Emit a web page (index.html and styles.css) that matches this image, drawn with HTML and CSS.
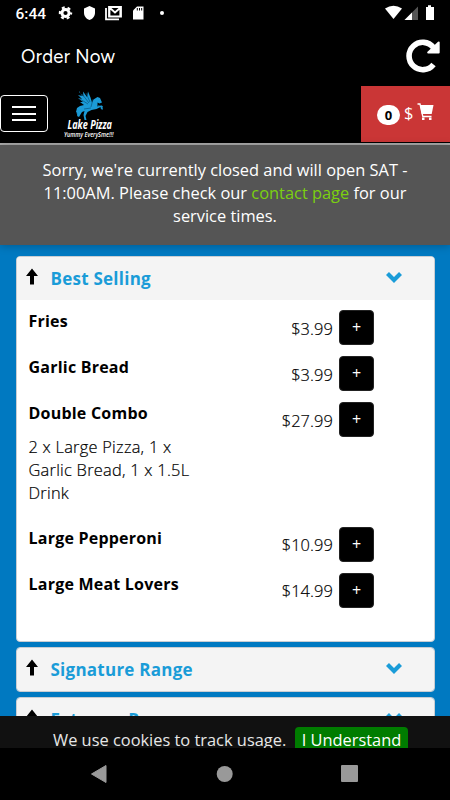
FILE: index.html
```html
<!DOCTYPE html>
<html lang="en">
<head>
<meta charset="utf-8">
<title>Order Now</title>
<link rel="stylesheet" href="styles.css">
</head>
<body>
<svg class="defs" width="0" height="0" aria-hidden="true">
  <symbol id="up" viewBox="0 0 14 17"><path d="M7 0.5 13 8H9v8.5H5V8H1z" fill="#000"/></symbol>
  <symbol id="down" viewBox="0 0 16 11"><path d="M1.500 1.500 8 8 14.500 1.500" fill="none" stroke="#1a9cd8" stroke-width="4.200"/></symbol>
</svg>
<div class="screen">
  <div class="status">
    <span class="clock">6:44</span>
    <svg class="status-left" width="110" height="28" viewBox="58 0 110 28" fill="#fff">
      <circle cx="65.5" cy="13" r="3.6" fill="none" stroke="#fff" stroke-width="3"/>
      <circle cx="65.5" cy="13" r="5.6" fill="none" stroke="#fff" stroke-width="2.2" stroke-dasharray="2.9 2.964" stroke-dashoffset="1.45"/>
      <path d="M89.500 6 95 8.500V13c0 3-2.300 6-5.500 7-3.200-1-5.500-4-5.500-7V8.500z"/>
      <path d="M106 8v11.300h13M109 7h12v9.500h-12zM109.500 7.500v8.500M110 8l5 4.500 5-4.500M120.300 7.500v8.500" fill="none" stroke="#fff" stroke-width="1.800"/>
      <path d="M137 6.500h6.500v13H133V10.500z"/>
      <path d="M137.300 8v2.500M139.500 8v2.500M141.700 8v2.500" stroke="#000"/>
      <circle cx="162" cy="13" r="2"/>
    </svg>
    <svg class="status-right" width="55" height="28" viewBox="383 0 55 28" fill="#fff">
      <path d="M385 8.500Q393.500 3 402 8.500L393.500 19z"/>
      <path d="M418 6.500V20H404.500z" fill="#555"/><path d="M412 12.500V20h-7.500z"/>
      <path d="M426 7h2V5.300h3V7h3v13h-8z"/>
    </svg>
  </div>
  <header class="title">
    <h1>Order Now</h1>
    <svg class="reload" width="36" height="36" viewBox="405 38 36 36">
      <path d="M433.500 64.500A13.700 13.700 0 1 1 433.500 47.500" fill="none" stroke="#fff" stroke-width="5.600"/>
      <path d="M438.700 42.500v10h-10.500z" fill="#fff" stroke="#fff" stroke-width="2" stroke-linejoin="round"/>
    </svg>
  </header>
  <nav class="navbar">
    <div class="burger"><i></i><i></i><i></i></div>
    <svg class="logo" width="56" height="56" viewBox="62 86 56 56">
      <g fill="#1b9bd7">
        <path d="M79 92l4.500 4.500-.5-5 4 5.500 1-5.500 2.500 6 1.500 5 1.500-3 4-2.500 2.500 1 2 4.500-2.500 1-2-1 0 4 4.500-1 1 4-1.500 0-1-2.500-4 2-5 1-4 2-2 4 1 4-2 0-1-5 1-4-2.500 1-3 5-2-1 1-3-2-1 1-4 3-2 4-1-4-3 3 0-5-4 4 1-4-4 4 1-3-5z"/>
        <path d="M79 111q-3 1-1 4M98 106l4 .5-1 2" fill="none" stroke="#1b9bd7" stroke-width="1.200"/>
      </g>
      <path d="M82 94l7 9M86 93l4 9M80 99l8 5M93 99l-2 8M84 109l7-1" stroke="#064a70" stroke-width=".6"/>
      <text x="67.500" y="129" class="logo-name" textLength="44.500" lengthAdjust="spacingAndGlyphs">Lake Pizza</text>
      <text x="64" y="137.300" class="logo-tag" textLength="49.500" lengthAdjust="spacingAndGlyphs">Yummy EverySme!!!</text>
    </svg>
    <div class="cart">
      <span class="count">0</span><span class="dollar">$</span>
      <svg width="18" height="18" viewBox="418 103 18 18"><path d="M418.500 104h2.500l2.800 12.500H432.500" fill="none" stroke="#fff" stroke-width="1.300"/><path d="M421 105h13.500l-1.800 9h-10z" fill="#fff"/><path d="M423 117.500h2.500v2.500h-2.500zM430 117.500h2.500v2.500h-2.500z" fill="#fff"/></svg>
    </div>
  </nav>
  <div class="notice">Sorry, we're currently closed and will open SAT - 11:00AM. Please check our <a>contact page</a> for our service times.</div>
  <main>
    <section class="card first">
      <h2><svg class="up"><use href="#up"/></svg><span>Best Selling</span><svg class="down"><use href="#down"/></svg></h2>
      <div class="items">
        <div class="item"><div class="name">Fries</div><div class="price">$3.99</div><b class="add">+</b></div>
        <div class="item"><div class="name">Garlic Bread</div><div class="price">$3.99</div><b class="add">+</b></div>
        <div class="item combo"><div class="name">Double Combo<p>2 x Large Pizza, 1 x Garlic Bread, 1 x 1.5L Drink</p></div><div class="price">$27.99</div><b class="add">+</b></div>
        <div class="item"><div class="name">Large Pepperoni</div><div class="price">$10.99</div><b class="add">+</b></div>
        <div class="item"><div class="name">Large Meat Lovers</div><div class="price">$14.99</div><b class="add">+</b></div>
      </div>
    </section>
    <section class="card"><h2><svg class="up"><use href="#up"/></svg><span>Signature Range</span><svg class="down"><use href="#down"/></svg></h2></section>
    <section class="card"><h2><svg class="up"><use href="#up"/></svg><span>Extreme Range</span><svg class="down"><use href="#down"/></svg></h2></section>
  </main>
  <div class="cookies"><span>We use cookies to track usage.</span><b>I Understand</b></div>
  <footer>
    <svg width="450" height="52" viewBox="0 748 450 52" fill="#999"><path d="M106 765.500v17L91.500 774z" stroke="#999" stroke-linejoin="round"/><circle cx="224.700" cy="774" r="8"/><rect x="341" y="765" width="17" height="17" rx="1"/></svg>
  </footer>
</div>
</body>
</html>
```
FILE: styles.css
```css
* { box-sizing: border-box; }
body { margin: 0; background: #000; }
.defs { display: block; }
.screen { width: 450px; height: 800px; overflow: hidden; display: flex; flex-direction: column; font: 16.4px/23px "Open Sans", sans-serif; background: #0079c1; }
.status { height: 28px; flex: none; background: #000; display: flex; color: #fff; padding: 0 12px 0 15.5px; }
.clock { font: 500 15.5px/28px Roboto, sans-serif; width: 42.5px; letter-spacing: 0; }
.status-right { margin-left: auto; }
.title { height: 58px; flex: none; background: #000; display: flex; justify-content: space-between; padding: 10px 9px 0 21px; }
h1 { margin: 0; color: #fff; font: 400 18.5px/38px Figtree, Lato, sans-serif; letter-spacing: .3px; }
.navbar { height: 59px; flex: none; background: #000; display: flex; border-bottom: 2px solid #aaa; }
.burger { width: 48px; height: 37px; margin-top: 9px; border: 1.5px solid #fff; border-radius: 4px; display: flex; flex-direction: column; align-items: center; justify-content: center; gap: 4.5px; }
.burger i { width: 24px; height: 2px; background: #fff; }
.logo { margin-left: 14px; }
.logo-name { fill: #fff; font: italic 700 13px "Open Sans", sans-serif; }
.logo-tag { fill: #fff; font: italic 600 6.5px "Open Sans", sans-serif; }
.cart { margin-left: auto; width: 89px; height: 56px; background: #ca3636; color: #fff; display: flex; align-items: center; padding: 0 0 0 16px; }
.count { width: 23px; height: 20px; border-radius: 10px; background: #fff; color: #000; font-size: 13px; font-weight: 700; line-height: 20px; text-align: center; margin-top: 1px; }
.dollar { margin: -3px 4px 0 4px; }
.cart svg { margin-top: -4px; }
.notice { height: 100px; flex: none; padding: 13px 36px; background: #555; color: #fff; text-align: center; position: relative; box-shadow: 0 1px 8px rgba(0,0,0,.25); }
.notice a { color: #7bd00f; }
main { height: 471px; flex: none; padding: 11px 15px 0 16px; overflow: hidden; }
.card { background: #fff; border: 1px solid #c9cdd2; border-radius: 4px; height: 45px; margin-bottom: 5px; overflow: hidden; }
.card.first { height: 386px; }
h2 { margin: 0; height: 43px; background: #f4f4f4; display: flex; align-items: center; padding: 0 32px 0 8px; color: #1a9cd8; font-size: 17px; font-weight: 700; letter-spacing: .25px; }
h2 span { margin-top: -1px; }
.up { width: 14px; height: 17px; margin: -4px 11.5px 0 0; }
.down { width: 16px; height: 11px; margin-left: auto; margin-top: -3px; }
.items { padding: 10px 60px 0 11.5px; color: #000; }
.item { height: 46px; display: flex; }
.item.combo { height: 124.5px; }
.name { width: 174px; font-weight: 700; font-size: 16px; letter-spacing: .22px; }
.name p { margin: 10px 0 0; font-size: 16.4px; font-weight: 300; letter-spacing: .25px; -webkit-text-stroke: .2px #000; }
.price { margin-left: auto; padding-top: 6.5px; font-weight: 300; letter-spacing: .1px; -webkit-text-stroke: .2px #000; }
.add { width: 35px; height: 35px; margin-left: 6px; border: 1px solid #222; border-radius: 4px; background: #000; color: #fff; font-size: 16px; font-weight: 400; line-height: 32px; text-align: center; }
.cookies { height: 32px; flex: none; background: #111; color: #e7e7e7; display: flex; padding: 11px 42px 0 53px; overflow: hidden; justify-content: space-between; white-space: nowrap; }
.cookies span { line-height: 25px; }
.cookies b { width: 113px; height: 30px; border-radius: 4px; background: #007c00; color: #fff; font-weight: 400; text-align: center; line-height: 25px; }
footer { height: 52px; flex: none; background: #000; }
```
